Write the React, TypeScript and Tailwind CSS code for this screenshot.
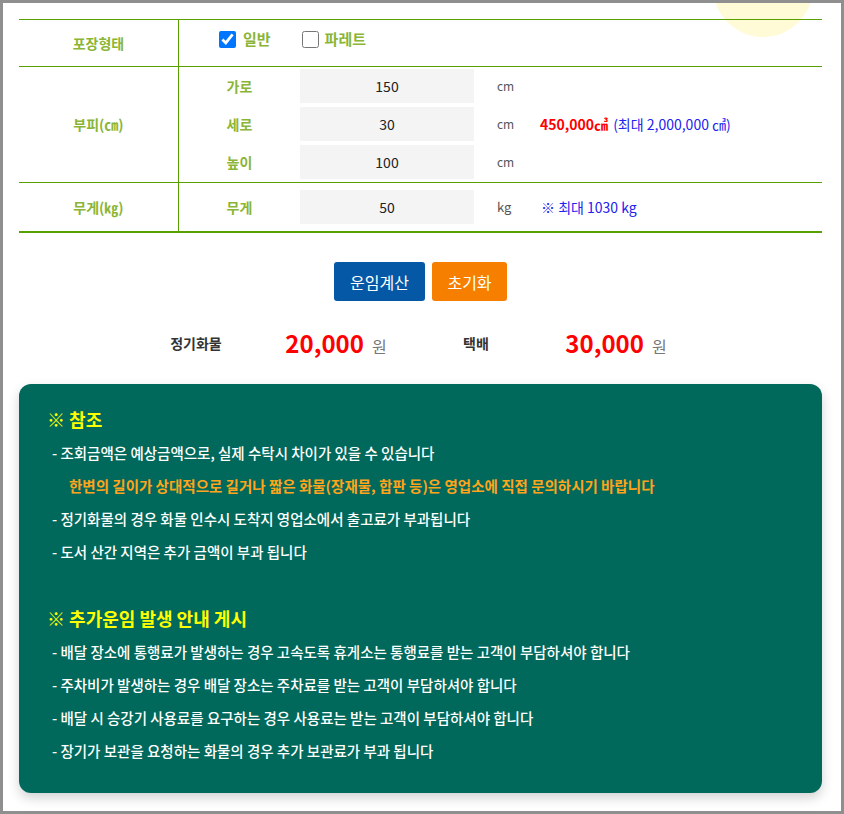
import React from "react";

const font = { fontFamily: '"Noto Sans CJK KR", "Noto Sans", sans-serif' };

function Label({ children }: { children: React.ReactNode }) {
  return (
    <div className="w-[121px] shrink-0 text-center text-[14px] font-semibold text-[#8ab536]">
      {children}
    </div>
  );
}

function InputBox({ value }: { value: string }) {
  return (
    <div className="w-[174px] h-[34px] shrink-0 bg-[#f4f4f4] flex items-center justify-center text-[14px] text-[#222]">
      {value}
    </div>
  );
}

export default function App() {
  return (
    <div
      className="relative w-[844px] h-[814px] border-[3px] border-[#8f8f8f] bg-white overflow-hidden"
      style={font}
    >
      <div className="absolute left-[710px] top-[-66px] w-[100px] h-[100px] rounded-full bg-[#fffbd6]" />

      <div className="relative pl-[16px] pr-[19px] pt-[16px]">
        {/* table */}
        <div className="border-t border-[#58a000]">
          {/* row 1 */}
          <div className="flex h-[47px] border-b border-[#58a000]">
            <div className="w-[160px] shrink-0 border-r border-[#58a000] flex items-center justify-center text-[14px] font-semibold text-[#8ab536]">
              포장형태
            </div>
            <div className="flex items-center pl-[40px] pb-[7px] gap-[31px]">
              <label className="flex items-center gap-[7px] text-[15px] font-semibold text-[#8ab536]">
                <input type="checkbox" checked readOnly className="w-[17px] h-[17px] m-0 accent-[#0075ff]" />
                일반
              </label>
              <label className="flex items-center gap-[6px] text-[15px] font-semibold text-[#8ab536]">
                <input type="checkbox" checked={false} readOnly className="w-[17px] h-[17px] m-0" />
                파레트
              </label>
            </div>
          </div>
          {/* row 2 */}
          <div className="flex h-[116px] border-b border-[#58a000]">
            <div className="w-[160px] shrink-0 border-r border-[#58a000] flex items-center justify-center text-[14px] font-semibold text-[#8ab536]">
              부피(㎝)
            </div>
            <div className="flex flex-col">
              {[
                ["가로", "150", false],
                ["세로", "30", true],
                ["높이", "100", false],
              ].map(([l, v, note]) => (
                <div key={l as string} className="flex items-center h-[38px]">
                  <Label>{l}</Label>
                  <InputBox value={v as string} />
                  <div className="w-[66px] shrink-0 pl-[23px] text-[12px] text-[#555]">cm</div>
                  {note ? (
                    <div className="flex items-baseline gap-[5px]">
                      <span className="text-[14px] font-bold text-[#ff0000]">
                        450,000㎤
                      </span>
                      <span className="text-[14px] text-[#2222ee]">(최대 2,000,000 ㎤)</span>
                    </div>
                  ) : null}
                </div>
              ))}
            </div>
          </div>
          {/* row 3 */}
          <div className="flex h-[50px] border-b-2 border-[#58a000]">
            <div className="w-[160px] shrink-0 border-r border-[#58a000] flex items-center justify-center text-[14px] font-semibold text-[#8ab536]">
              무게(㎏)
            </div>
            <div className="flex items-center">
              <Label>무게</Label>
              <InputBox value="50" />
              <div className="w-[67px] shrink-0 pl-[23px] text-[13px] text-[#555]">kg</div>
              <div className="text-[14px] text-[#2222ee]">※ 최대 1030 kg</div>
            </div>
          </div>
        </div>

        {/* buttons */}
        <div className="flex justify-center gap-[7px] mt-[29px]">
          <button className="w-[91px] h-[39px] rounded-[3px] bg-[#0458a5] text-white text-[16px]">
            운임계산
          </button>
          <button className="w-[75px] h-[39px] rounded-[3px] bg-[#f77f00] text-white text-[16px]">
            초기화
          </button>
        </div>

        {/* summary */}
        <div className="flex items-center h-[50px] mt-[17px] pl-[107px]">
          <div className="w-[140px] text-center text-[14px] font-semibold text-[#333]">정기화물</div>
          <div className="w-[140px] flex items-baseline justify-center gap-[8px]">
            <span className="text-[24px] font-bold text-[#ff0000]">20,000</span>
            <span className="text-[16px] text-[#777]">원</span>
          </div>
          <div className="w-[140px] text-center text-[14px] font-semibold text-[#333]">택배</div>
          <div className="w-[140px] flex items-baseline justify-center gap-[8px]">
            <span className="text-[24px] font-bold text-[#ff0000]">30,000</span>
            <span className="text-[16px] text-[#777]">원</span>
          </div>
        </div>

        {/* panel */}
        <div className="mt-[16px] rounded-[12px] bg-[#00695c] pl-[28px] pt-[18px] pb-[26px] shadow-[0_5px_12px_rgba(0,0,0,0.18)]">
          <div className="h-[34px] flex items-center text-[18px] font-bold text-[#ffff00]">※ 참조</div>
          <div className="leading-[33px] text-[14.5px] font-medium text-white">
            <div className="pl-[5px]">- 조회금액은 예상금액으로, 실제 수탁시 차이가 있을 수 있습니다</div>
            <div className="pl-[22px] font-bold text-[#ffa41b]">
              한변의 길이가 상대적으로 길거나 짧은 화물(장재물, 합판 등)은 영업소에 직접 문의하시기 바랍니다
            </div>
            <div className="pl-[5px]">- 정기화물의 경우 화물 인수시 도착지 영업소에서 출고료가 부과됩니다</div>
            <div className="pl-[5px]">- 도서 산간 지역은 추가 금액이 부과 됩니다</div>
            <div className="h-[33px]" />
          </div>
          <div className="h-[34px] flex items-center text-[18px] font-bold text-[#ffff00]">
            ※ 추가운임 발생 안내 게시
          </div>
          <div className="leading-[33px] text-[14.5px] font-medium text-white">
            <div className="pl-[5px]">- 배달 장소에 통행료가 발생하는 경우 고속도록 휴게소는 통행료를 받는 고객이 부담하셔야 합니다</div>
            <div className="pl-[5px]">- 주차비가 발생하는 경우 배달 장소는 주차료를 받는 고객이 부담하셔야 합니다</div>
            <div className="pl-[5px]">- 배달 시 승강기 사용료를 요구하는 경우 사용료는 받는 고객이 부담하셔야 합니다</div>
            <div className="pl-[5px]">- 장기가 보관을 요청하는 화물의 경우 추가 보관료가 부과 됩니다</div>
          </div>
        </div>
      </div>
    </div>
  );
}
